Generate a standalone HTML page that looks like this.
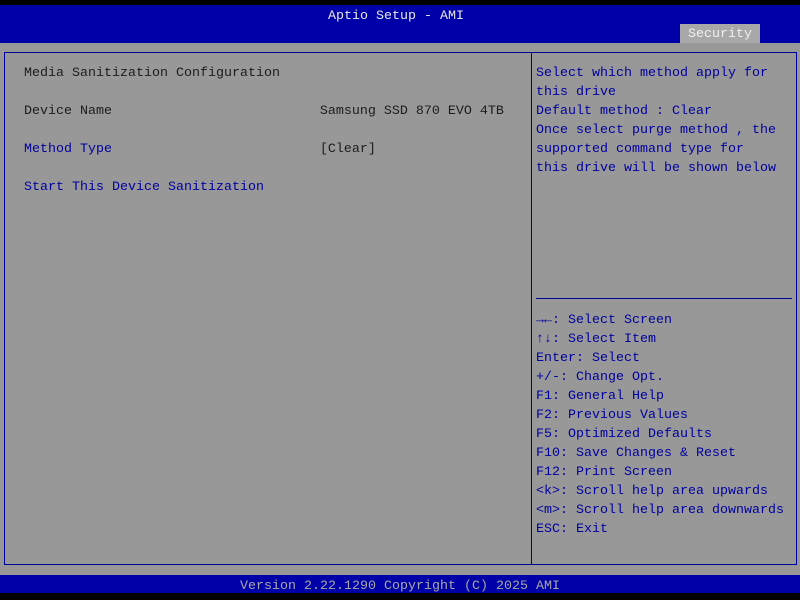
<!DOCTYPE html>
<html><head><style>
body{margin:0;width:800px;height:600px;background:#000;position:relative;overflow:hidden;font-family:"Liberation Mono",monospace;font-size:13.33px;}
.t{position:absolute;white-space:pre;line-height:19px;}
</style></head><body>
<div style="position:absolute;left:0;top:5px;width:800px;height:38px;background:#0000a8"></div>
<div class="t" style="left:0;width:792px;top:7px;text-align:center;color:#e8e8e8">Aptio Setup - AMI</div>
<div style="position:absolute;left:680px;top:24px;width:80px;height:19px;background:#a8a8a8"></div>
<div class="t" style="left:680px;width:80px;top:25px;text-align:center;color:#f0f0f0">Security</div>
<div style="position:absolute;left:0;top:43px;width:800px;height:532px;background:#989898"></div>
<div style="position:absolute;left:4px;top:52px;width:791px;height:511px;border:1px solid #00009a"></div>
<div style="position:absolute;left:531px;top:52px;width:1px;height:513px;background:#00009a"></div>
<div style="position:absolute;left:536px;top:298px;width:256px;height:1px;background:#00009a"></div>
<div class="t" style="left:24px;top:64px;color:#1c1c1c">Media Sanitization Configuration

Device Name                          Samsung SSD 870 EVO 4TB</div>
<div class="t" style="left:24px;top:140px;color:#0000a0">Method Type                          <span style="color:#1c1c1c">[Clear]</span>

Start This Device Sanitization</div>
<div class="t" style="left:536px;top:64px;color:#0000a0">Select which method apply for
this drive
Default method : Clear
Once select purge method , the
supported command type for
this drive will be shown below</div>
<div class="t" style="left:536px;top:311px;color:#0000a0"><b>→←</b>: Select Screen
<b>↑↓</b>: Select Item
Enter: Select
+/-: Change Opt.
F1: General Help
F2: Previous Values
F5: Optimized Defaults
F10: Save Changes &amp; Reset
F12: Print Screen
&lt;k&gt;: Scroll help area upwards
&lt;m&gt;: Scroll help area downwards
ESC: Exit</div>
<div style="position:absolute;left:0;top:575px;width:800px;height:18px;background:#0000a8"></div>
<div class="t" style="left:0;width:800px;top:578px;line-height:18px;text-align:center;color:#a8a8a8">Version 2.22.1290 Copyright (C) 2025 AMI</div>
</body></html>
